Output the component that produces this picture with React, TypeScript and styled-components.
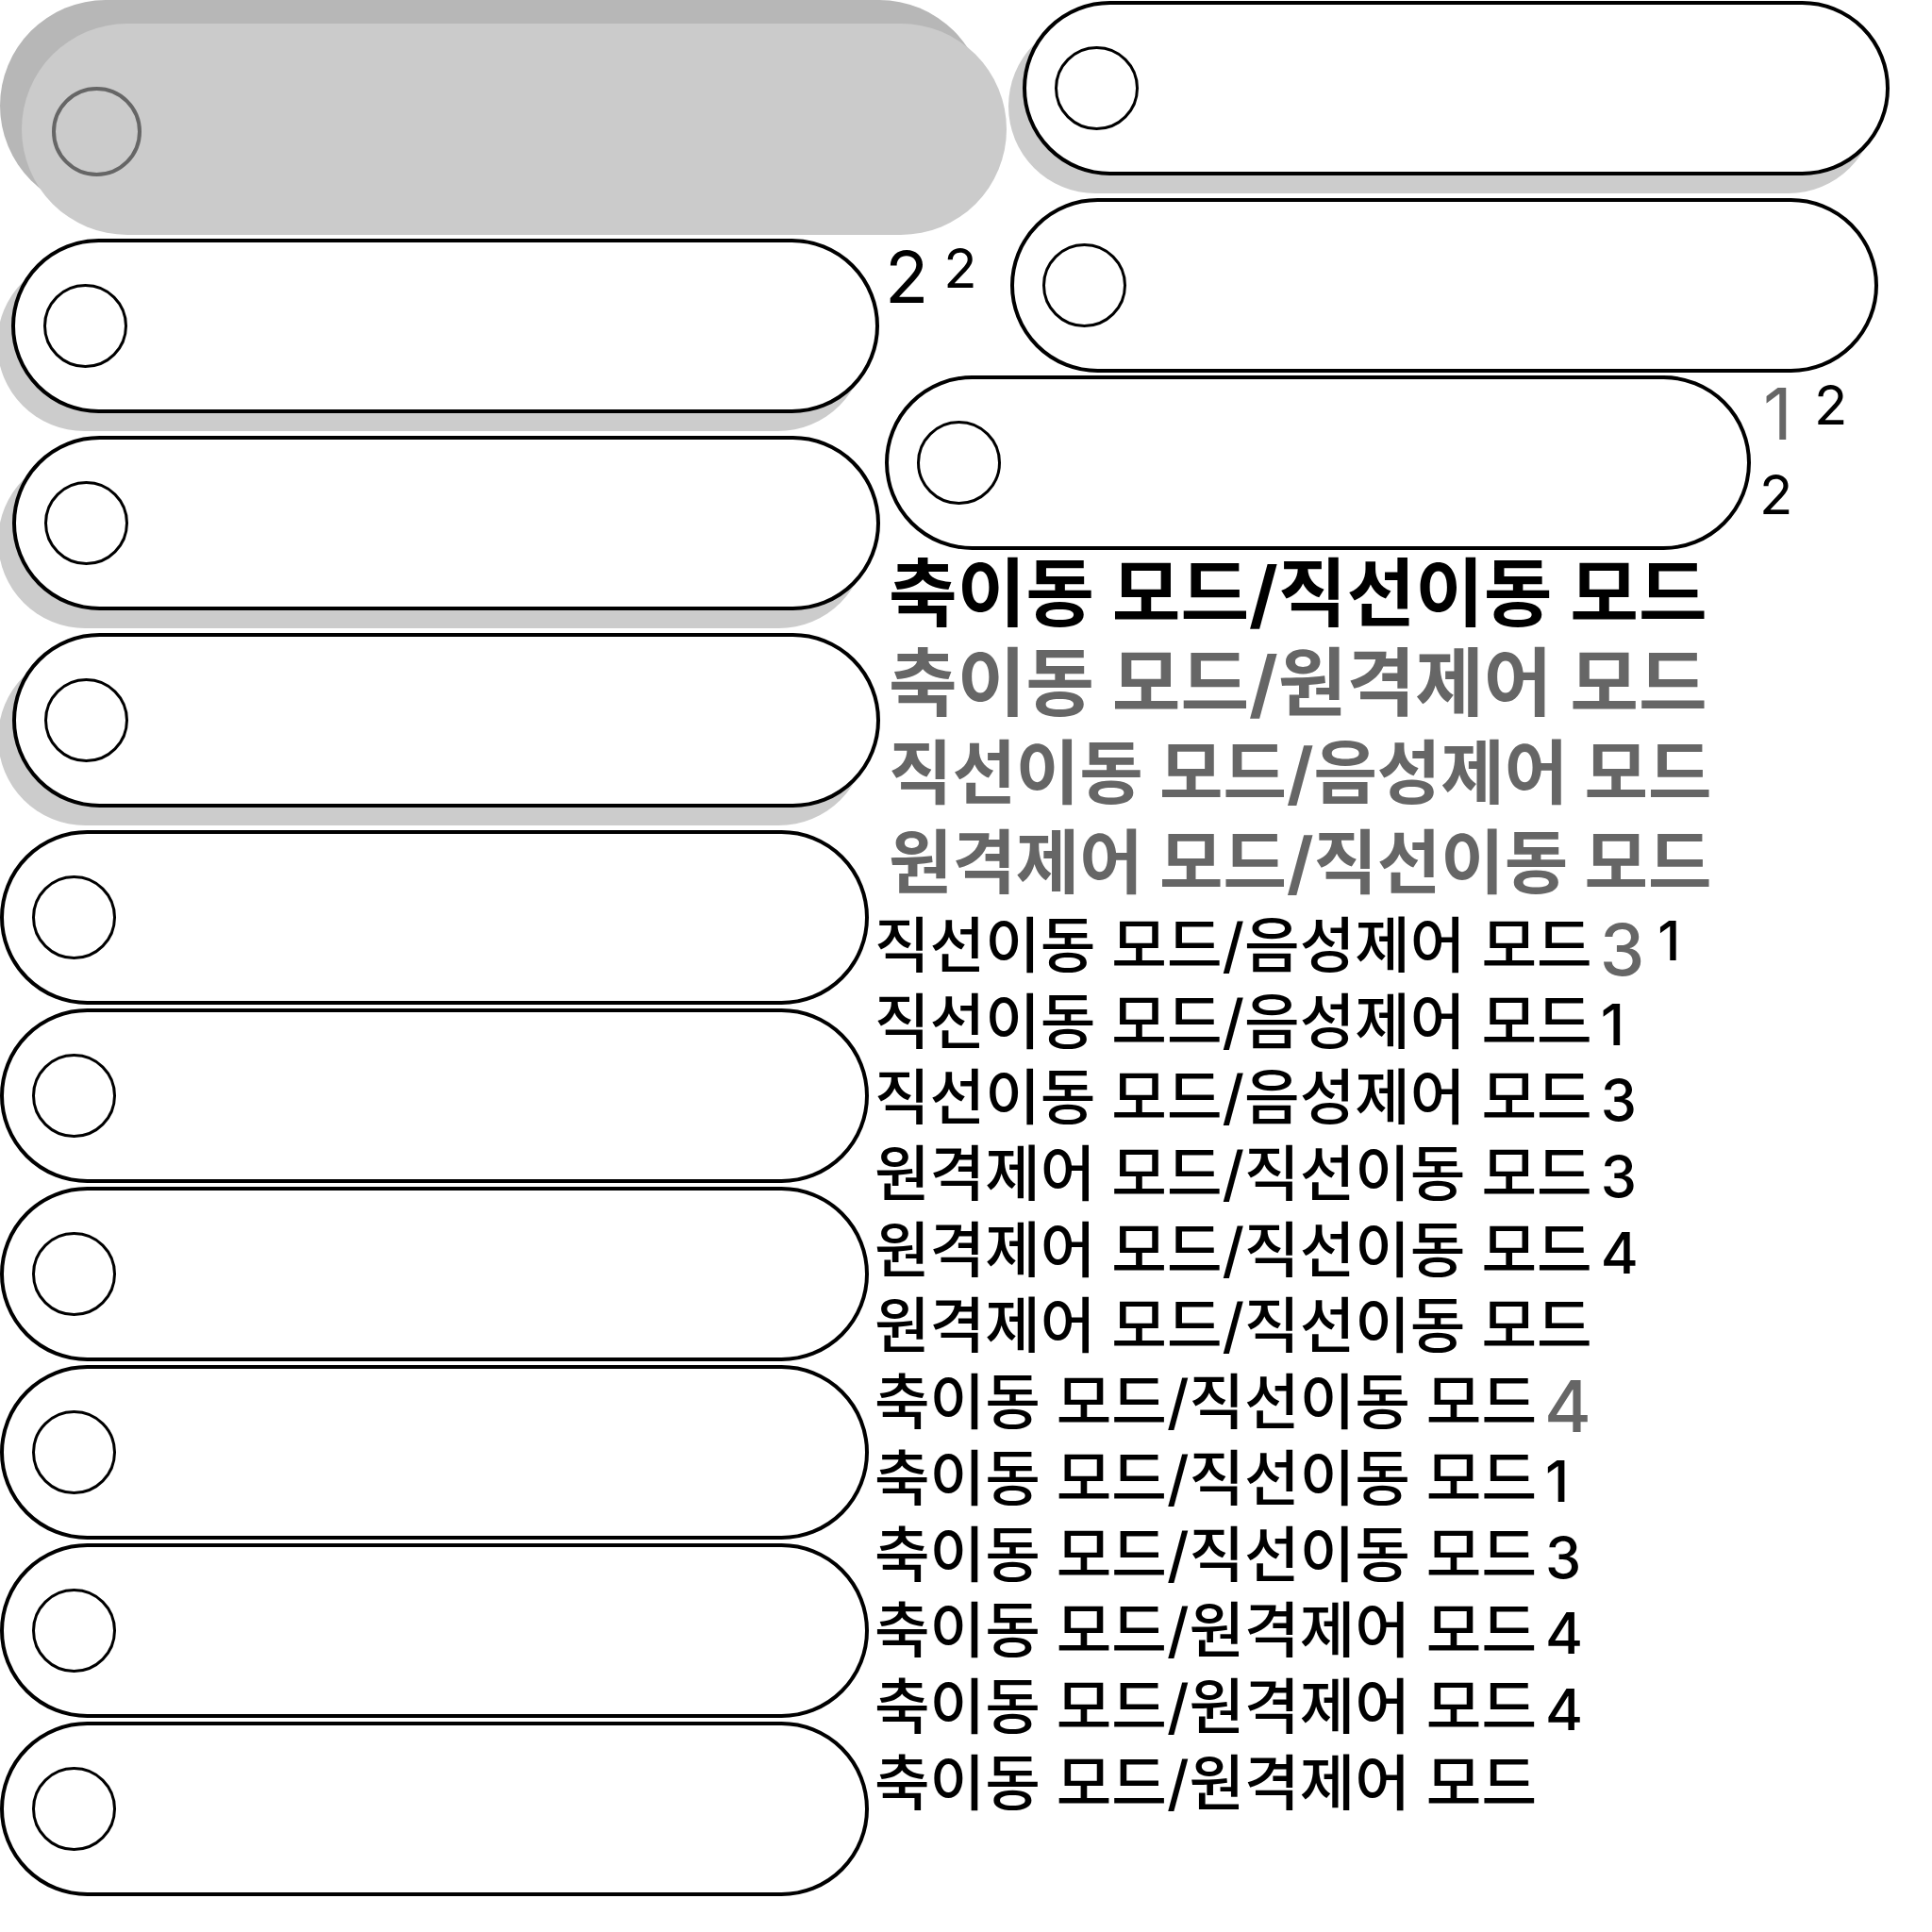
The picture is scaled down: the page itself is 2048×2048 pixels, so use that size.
import React from "react";
import styled, { createGlobalStyle } from "styled-components";

const Global = createGlobalStyle`
  html, body { margin: 0; padding: 0; background: #fff; }
  body {
    font-family: Inter, "Noto Sans CJK KR", "Noto Sans", sans-serif;
    width: 2048px;
    height: 2048px;
    overflow: hidden;
  }
`;

const Page = styled.div`
  display: flex;
  align-items: flex-start;
  width: 2048px;
  height: 2048px;
`;

const LeftColumn = styled.div`
  display: flex;
  flex-direction: column;
  gap: 4px;
  width: 932px;
  flex-shrink: 0;
`;

const RightColumn = styled.div`
  display: flex;
  flex-direction: column;
  align-items: flex-start;
  flex-shrink: 0;
  width: 1116px;
`;

const GhostPill = styled.div`
  box-sizing: border-box;
  display: flex;
  align-items: center;
  flex-shrink: 0;
  width: 1044px;
  height: 224px;
  margin: 25px 0 0 23px;
  padding-left: 32px;
  background: #cbcbcb;
  border-radius: 112px;
  box-shadow: -23px -25px 0 #b7b7b7;
`;

const GhostKnob = styled.span`
  box-sizing: border-box;
  width: 95px;
  height: 95px;
  margin-top: 4px;
  border-radius: 50%;
  border: 4px solid #666;
`;

const Pill = styled.div<{ $indent: number; $shadow?: boolean; $width?: number }>`
  box-sizing: border-box;
  display: flex;
  align-items: center;
  flex-shrink: 0;
  width: ${(p) => p.$width ?? 920}px;
  height: 185px;
  margin-left: ${(p) => p.$indent}px;
  padding-left: 30px;
  background: #fff;
  border: 4px solid #000;
  border-radius: 93px;
  ${(p) => (p.$shadow ? "box-shadow: -15px 19px 0 #ccc; margin-bottom: 20px;" : "")}
`;

const Knob = styled.span`
  box-sizing: border-box;
  flex-shrink: 0;
  width: 89px;
  height: 89px;
  border-radius: 50%;
  border: 3px solid #000;
`;

const TopPill = styled(Pill)`
  margin-top: 1px;
`;

const PillRow = styled.div<{ $top: number; $lead: number }>`
  display: grid;
  grid-template-columns: ${(p) => p.$lead}px auto;
  align-items: start;
  margin-top: ${(p) => p.$top}px;
`;

const Badge = styled.span<{ $pad?: number; $top?: number }>`
  display: inline-flex;
  align-items: flex-start;
  padding-left: ${(p) => p.$pad ?? 0}px;
  margin-top: ${(p) => p.$top ?? 0}px;
  line-height: 1;
`;

const BigDigit = styled.span<{ $muted?: boolean }>`
  font-size: 76px;
  line-height: 1;
  color: ${(p) => (p.$muted ? "#666" : "#000")};
`;

const SupDigit = styled.span<{ $gap?: number }>`
  font-size: 58px;
  line-height: 1;
  color: #000;
  margin-left: ${(p) => p.$gap ?? 14}px;
`;

const NumberStack = styled.div`
  display: flex;
  flex-direction: column;
  align-items: flex-start;
  margin: 2px 0 0 13px;
`;

const LoneDigit = styled.span`
  font-size: 58px;
  line-height: 1;
  margin-top: 19px;
  margin-left: -4px;
`;

const TextBlock = styled.div`
  display: flex;
  flex-direction: column;
  margin-top: -1px;
`;

const HeadLine = styled.div<{ $muted?: boolean; $size: number }>`
  margin-left: 10px;
  font-size: ${(p) => p.$size}px;
  line-height: 95px;
  height: 95px;
  font-weight: 700;
  color: ${(p) => (p.$muted ? "#666" : "#000")};
  white-space: nowrap;
`;

const Line = styled.div`
  display: flex;
  align-items: flex-start;
  height: 80.7px;
  margin-left: -5px;
  font-size: 63.7px;
  font-weight: 500;
  line-height: 80.7px;
  color: #000;
  white-space: nowrap;
`;

const Num = styled.span`
  margin-left: 9px;
  margin-top: 3px;
  font-size: 61px;
`;

const InlineBadge = styled(Badge)`
  margin-left: 8px;
  margin-top: 6px;
`;

const heads = [
  { text: "축이동 모드/직선이동 모드", muted: false, size: 79 },
  { text: "축이동 모드/원격제어 모드", muted: true, size: 79 },
  { text: "직선이동 모드/음성제어 모드", muted: true, size: 73.3 },
  { text: "원격제어 모드/직선이동 모드", muted: true, size: 73.3 },
];

type Row = { text: string; num?: string; big?: string; sup?: string };

const rows: Row[] = [
  { text: "직선이동 모드/음성제어 모드", big: "3", sup: "1" },
  { text: "직선이동 모드/음성제어 모드", num: "1" },
  { text: "직선이동 모드/음성제어 모드", num: "3" },
  { text: "원격제어 모드/직선이동 모드", num: "3" },
  { text: "원격제어 모드/직선이동 모드", num: "4" },
  { text: "원격제어 모드/직선이동 모드" },
  { text: "축이동 모드/직선이동 모드", big: "4" },
  { text: "축이동 모드/직선이동 모드", num: "1" },
  { text: "축이동 모드/직선이동 모드", num: "3" },
  { text: "축이동 모드/원격제어 모드", num: "4" },
  { text: "축이동 모드/원격제어 모드", num: "4" },
  { text: "축이동 모드/원격제어 모드" },
];

const shadowPills = [12, 13, 13];
const plainPills = [0, 0, 0, 0, 0, 0];

export default function App() {
  return (
    <>
      <Global />
      <Page>
        <LeftColumn>
          <GhostPill>
            <GhostKnob />
          </GhostPill>
          {shadowPills.map((x, i) => (
            <Pill key={"s" + i} $indent={x} $shadow>
              <Knob />
            </Pill>
          ))}
          {plainPills.map((x, i) => (
            <Pill key={"p" + i} $indent={x} $width={921}>
              <Knob />
            </Pill>
          ))}
        </LeftColumn>
        <RightColumn>
          <TopPill $indent={152} $width={919} $shadow>
            <Knob />
          </TopPill>
          <PillRow $top={4} $lead={139}>
            <Badge $pad={6} $top={45}>
              <BigDigit>2</BigDigit>
              <SupDigit $gap={16}>2</SupDigit>
            </Badge>
            <Pill $indent={0} $width={920}>
              <Knob />
            </Pill>
          </PillRow>
          <PillRow $top={3} $lead={924}>
            <Pill $indent={6} $width={918}>
              <Knob />
            </Pill>
            <NumberStack>
              <Badge>
                <BigDigit $muted>1</BigDigit>
                <SupDigit $gap={23}>2</SupDigit>
              </Badge>
              <LoneDigit>2</LoneDigit>
            </NumberStack>
          </PillRow>
          <TextBlock>
            {heads.map((h, i) => (
              <HeadLine key={i} $muted={h.muted} $size={h.size}>
                {h.text}
              </HeadLine>
            ))}
            {rows.map((r, i) => (
              <Line key={i}>
                <span>{r.text}</span>
                {r.num && <Num>{r.num}</Num>}
                {r.big && (
                  <InlineBadge>
                    <BigDigit $muted>{r.big}</BigDigit>
                    {r.sup && <SupDigit>{r.sup}</SupDigit>}
                  </InlineBadge>
                )}
              </Line>
            ))}
          </TextBlock>
        </RightColumn>
      </Page>
    </>
  );
}
